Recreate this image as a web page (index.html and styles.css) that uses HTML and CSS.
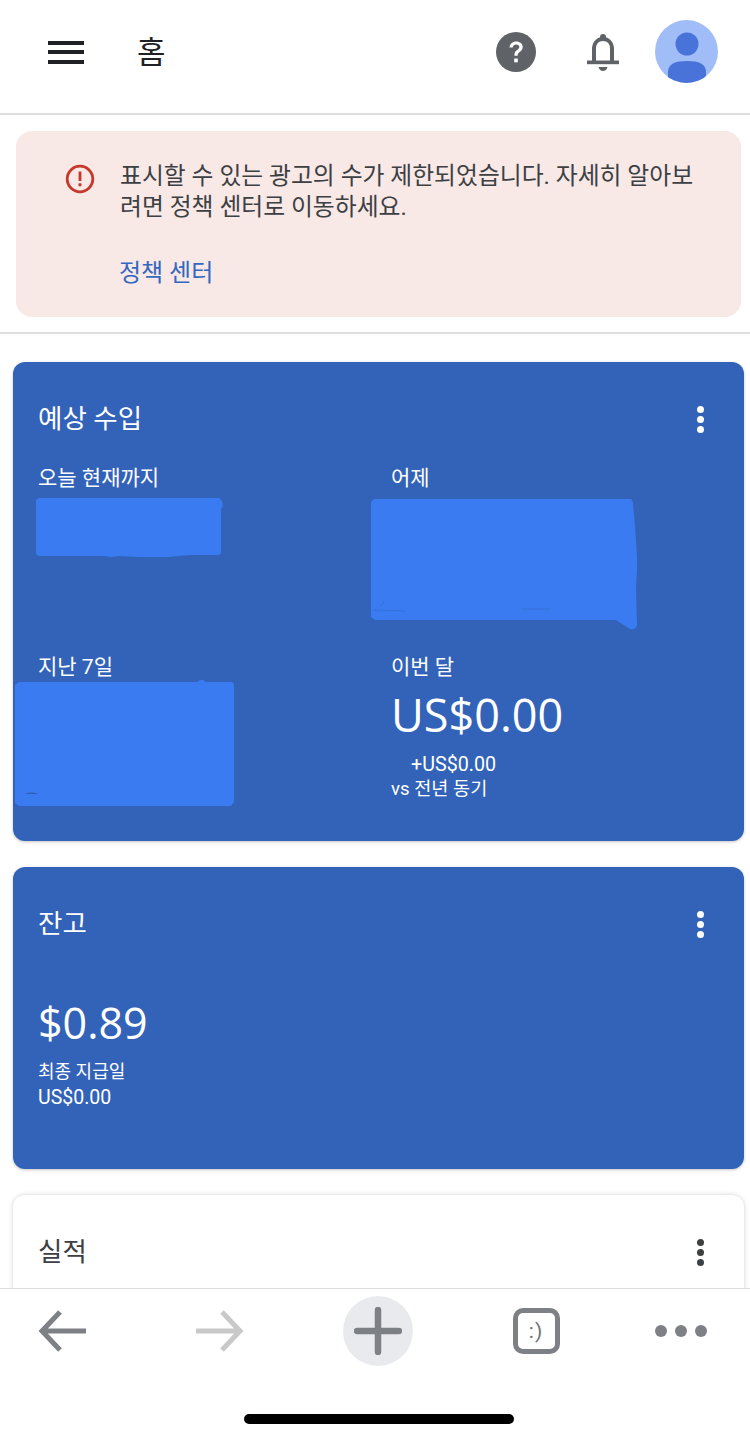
FILE: index.html
```html
<!DOCTYPE html>
<html lang="ko">
<head>
  <meta charset="UTF-8">
  <title>홈</title>
  <link rel="stylesheet" href="styles.css">
</head>
<body>
  <div class="page">
    <header class="topbar">
      <svg class="menu-icon" width="36" height="24" viewBox="0 0 36 24"><path d="M0 1h36v4H0zM0 10h36v4H0zM0 20h36v4H0z" fill="#202124"/></svg>
      <h1 class="page-title">홈</h1>
      <div class="topbar-actions">
        <svg class="help-icon" width="40" height="40" viewBox="0 0 40 40">
          <circle cx="20" cy="20" r="20" fill="#5f6368"/>
          <path d="M13.500 15.500c.4-3.700 3.100-6 6.700-6 3.800 0 6.500 2.300 6.500 5.500 0 2.300-1.100 3.600-3 5-1.600 1.200-2.100 2-2.100 3.800h-3.200c0-2.900.8-4.200 2.800-5.700 1.400-1.100 2.100-1.800 2.100-3 0-1.500-1.200-2.600-3.100-2.600-1.900 0-3.100 1.200-3.400 3z" fill="#fff"/>
          <rect x="18.200" y="26.500" width="3.600" height="3.800" fill="#fff"/>
        </svg>
        <svg class="bell-icon" width="32" height="40" viewBox="0 0 32 40">
          <path d="M7 30V17c0-6 3.700-10 9-10s9 4 9 10v13" fill="none" stroke="#5f6368" stroke-width="4"/>
          <path d="M0 28.500h32v3.700H0z" fill="#5f6368"/>
          <circle cx="16" cy="5" r="3" fill="#5f6368"/>
          <path d="M11.500 35h9c-.6 2.400-2.400 4-4.500 4s-3.900-1.600-4.500-4z" fill="#5f6368"/>
        </svg>
        <svg class="avatar" width="63" height="63" viewBox="0 0 63 63">
          <defs><clipPath id="avatarClip"><circle cx="31.500" cy="31.500" r="31.500"/></clipPath></defs>
          <circle cx="31.500" cy="31.500" r="31.500" fill="#a1bdf8"/>
          <g clip-path="url(#avatarClip)">
            <circle cx="32" cy="24" r="11.500" fill="#4a73d9"/>
            <path d="M13 52c0-8 7-11 19-11s19 3 19 11v11H13z" fill="#4a73d9"/>
          </g>
        </svg>
      </div>
    </header>

    <main class="content">
      <section class="notice">
        <svg class="notice-icon" width="30" height="30" viewBox="0 0 30 30">
          <circle cx="15" cy="15" r="12.800" fill="none" stroke="#c5392c" stroke-width="2.800"/>
          <path d="M13.600 7.500h2.800v9.500h-2.800z" fill="#c5392c"/>
          <circle cx="15" cy="20.800" r="1.700" fill="#c5392c"/>
        </svg>
        <div class="notice-body">
          <p class="notice-text">표시할 수 있는 광고의 수가 제한되었습니다. 자세히 알아보려면 정책 센터로 이동하세요.</p>
          <a class="notice-link">정책 센터</a>
        </div>
      </section>
      <hr class="divider">

      <section class="card card-blue card-earnings">
        <div class="card-head">
          <h2 class="card-title">예상 수입</h2>
          <span class="dots"><i></i><i></i><i></i></span>
        </div>
        <div class="stats">
          <div class="stat"><span class="stat-label">오늘 현재까지</span></div>
          <div class="stat"><span class="stat-label">어제</span></div>
          <div class="stat"><span class="stat-label">지난 7일</span></div>
          <div class="stat">
            <span class="stat-label">이번 달</span>
            <div class="amount">US$0.00</div>
            <div class="delta">+US$0.00</div>
            <div class="delta-note">vs 전년 동기</div>
          </div>
        </div>
        <svg class="scribble scribble-today" width="188" height="62" viewBox="0 0 188 62">
          <path d="M3 1h180l3 3 1 5-2 3v44l-2 2h-30l-20 2h-30l-20-1-8 1-6-1H3l-3-2V3z"/>
        </svg>
        <svg class="scribble scribble-yesterday" width="268" height="134" viewBox="0 0 268 134">
          <path d="M3 1h256c2 0 3 2 3 5l2 22 2 30v14l-1 18 1 36c0 4-3 6-7 5l-14-9H4l-4-3V4z"/>
          <path d="M10 108l3-5M3 112l32 1M150 111h30" fill="none" stroke="#3570dc" stroke-width="1"/>
        </svg>
        <svg class="scribble scribble-week" width="222" height="128" viewBox="0 0 222 128">
          <path d="M4 2h178l3-2 3 0 3 2h25c2 0 3 1 3 4v116l-3 4H4l-4-3V5z"/>
          <path d="M10 114c3-2 9-2 13 0z" fill="#2f5fb3"/>
        </svg>
      </section>

      <section class="card card-blue card-balance">
        <div class="card-head">
          <h2 class="card-title">잔고</h2>
          <span class="dots"><i></i><i></i><i></i></span>
        </div>
        <div class="amount balance-amount">$0.89</div>
        <div class="small-line">최종 지급일</div>
        <div class="small-line small-amount">US$0.00</div>
      </section>

      <section class="card card-white">
        <div class="card-head">
          <h2 class="card-title">실적</h2>
          <span class="dots"><i></i><i></i><i></i></span>
        </div>
        <div class="stat-label perf-label">지난 7일 - 마지막 일</div>
      </section>
    </main>

    <footer class="browser-bar">
      <div class="browser-icons">
        <svg width="48" height="44" viewBox="0 0 48 44"><path d="M22 3 4 22l18 19M4 22h44" fill="none" stroke="#7d8186" stroke-width="5"/></svg>
        <svg width="48" height="44" viewBox="0 0 48 44"><path d="M26 3l18 19-18 19M44 22H0" fill="none" stroke="#c9c9c9" stroke-width="5"/></svg>
        <div class="new-tab">
          <svg width="48" height="48" viewBox="0 0 48 48"><path d="M24 3v42M3 24h42" fill="none" stroke="#7d8186" stroke-width="6.500" stroke-linecap="round"/></svg>
        </div>
        <div class="tabs-btn">:)</div>
        <div class="more-btn"><i></i><i></i><i></i></div>
      </div>
      <div class="home-indicator"></div>
    </footer>
  </div>
</body>
</html>
```

FILE: styles.css
```css
* {
  box-sizing: border-box;
}

html, body {
  margin: 0;
  padding: 0;
}

body {
  font-family: Roboto, "Noto Sans CJK KR", sans-serif;
  background-color: #fff;
  color: #3c4043;
}

.page {
  width: 750px;
  height: 1440px;
  display: flex;
  flex-direction: column;
  overflow: hidden;
}

/* top bar */
.topbar {
  height: 115px;
  flex: none;
  display: flex;
  align-items: center;
  padding: 0 32px 10px 48px;
  border-bottom: 2px solid #dfdfdf;
}

.page-title {
  margin: -4px 0 0 53px;
  font-size: 31px;
  font-weight: 400;
  color: #202124;
}

.topbar-actions {
  margin-left: auto;
  display: flex;
  align-items: center;
}

.bell-icon {
  margin-left: 51px;
}

.avatar {
  margin-left: 36px;
}

/* main column */
.content {
  flex: 1;
  min-height: 0;
  overflow: hidden;
  padding-top: 16px;
}

.notice {
  height: 186px;
  margin: 0 9px 0 16px;
  padding: 30px 40px 0 49px;
  display: flex;
  background-color: #f8e8e6;
  border-radius: 16px;
}

.notice-icon {
  flex: none;
  margin-top: 3px;
}

.notice-body {
  margin-left: 25px;
}

.notice-text {
  margin: 0;
  font-size: 23.8px;
  line-height: 31px;
  color: #3c4043;
  word-break: break-all;
}

.notice-link {
  display: block;
  margin-top: 34px;
  margin-left: -1px;
  font-size: 24px;
  line-height: 32px;
  color: #3367c1;
}

.divider {
  height: 2px;
  margin: 15px 0 28px;
  border: 0;
  background-color: #dfdfdf;
}

/* cards */
.card {
  position: relative;
  margin: 0 6px 26px 13px;
  padding: 0 25px;
  border-radius: 12px;
  box-shadow: 0 1px 3px rgba(60, 64, 67, 0.3);
}

.card-blue {
  background-color: #3263b9;
  color: #fff;
}

.card-white {
  background-color: #fff;
  color: #3c4043;
  height: 200px;
  box-shadow: 0 0 4px rgba(60, 64, 67, 0.25);
}

.card-earnings {
  height: 479px;
}

.card-balance {
  height: 302px;
}

.card-head {
  display: flex;
  justify-content: space-between;
  align-items: center;
  height: 102px;
  padding-top: 7px;
}

.card-title {
  margin: 0;
  font-size: 26.5px;
  font-weight: 400;
}

.dots {
  display: flex;
  flex-direction: column;
  gap: 3px;
  margin: 5px 15px 0 0;
}

.dots i {
  width: 7px;
  height: 7px;
  border-radius: 50%;
  background-color: currentColor;
}

.stats {
  display: grid;
  grid-template-columns: 353px 1fr;
  grid-template-rows: 189px auto;
}

.stat-label {
  display: block;
  font-size: 21px;
  line-height: 28px;
}

.amount {
  font-size: 45px;
  line-height: 52px;
  margin-top: 8px;
  font-family: "Open Sans", Roboto, sans-serif;
}

.delta {
  margin: 11px 0 0 20px;
  font-size: 19.7px;
  line-height: 25px;
}

.delta-note {
  font-size: 18.6px;
  line-height: 25px;
}

.balance-amount {
  margin: 28px 0 10px;
  font-size: 43px;
}

.small-line {
  font-size: 18px;
  line-height: 26px;
}

.small-amount {
  font-size: 19.5px;
}

.perf-label {
  margin-top: -12px;
}

/* the blue marks painted over the figures */
.scribble {
  position: absolute;
  fill: #3a7bf2;
}

.scribble-today {
  left: 23px;
  top: 135px;
}

.scribble-yesterday {
  left: 358px;
  top: 136px;
}

.scribble-week {
  left: 2px;
  top: 318px;
}

/* browser bar */
.browser-bar {
  position: relative;
  height: 152px;
  flex: none;
  background-color: #fff;
  border-top: 1px solid #dcdcdc;
}

.browser-icons {
  display: grid;
  grid-template-columns: repeat(4, 158px) 132px;
  justify-items: center;
  align-items: center;
  margin-left: -17px;
  padding-top: 7px;
}

.new-tab {
  width: 70px;
  height: 70px;
  display: flex;
  align-items: center;
  justify-content: center;
  border-radius: 50%;
  background-color: #e8eaed;
}

.tabs-btn {
  width: 47px;
  height: 46px;
  display: flex;
  align-items: center;
  justify-content: center;
  border: 5px solid #7d8186;
  border-radius: 10px;
  font-size: 21px;
  letter-spacing: 1px;
  color: #6f7378;
}

.more-btn {
  display: flex;
  gap: 8px;
}

.more-btn i {
  width: 12px;
  height: 12px;
  border-radius: 50%;
  background-color: #7d8186;
}

.home-indicator {
  position: absolute;
  left: 244px;
  top: 125px;
  width: 270px;
  height: 10px;
  border-radius: 5px;
  background-color: #000;
}
```
